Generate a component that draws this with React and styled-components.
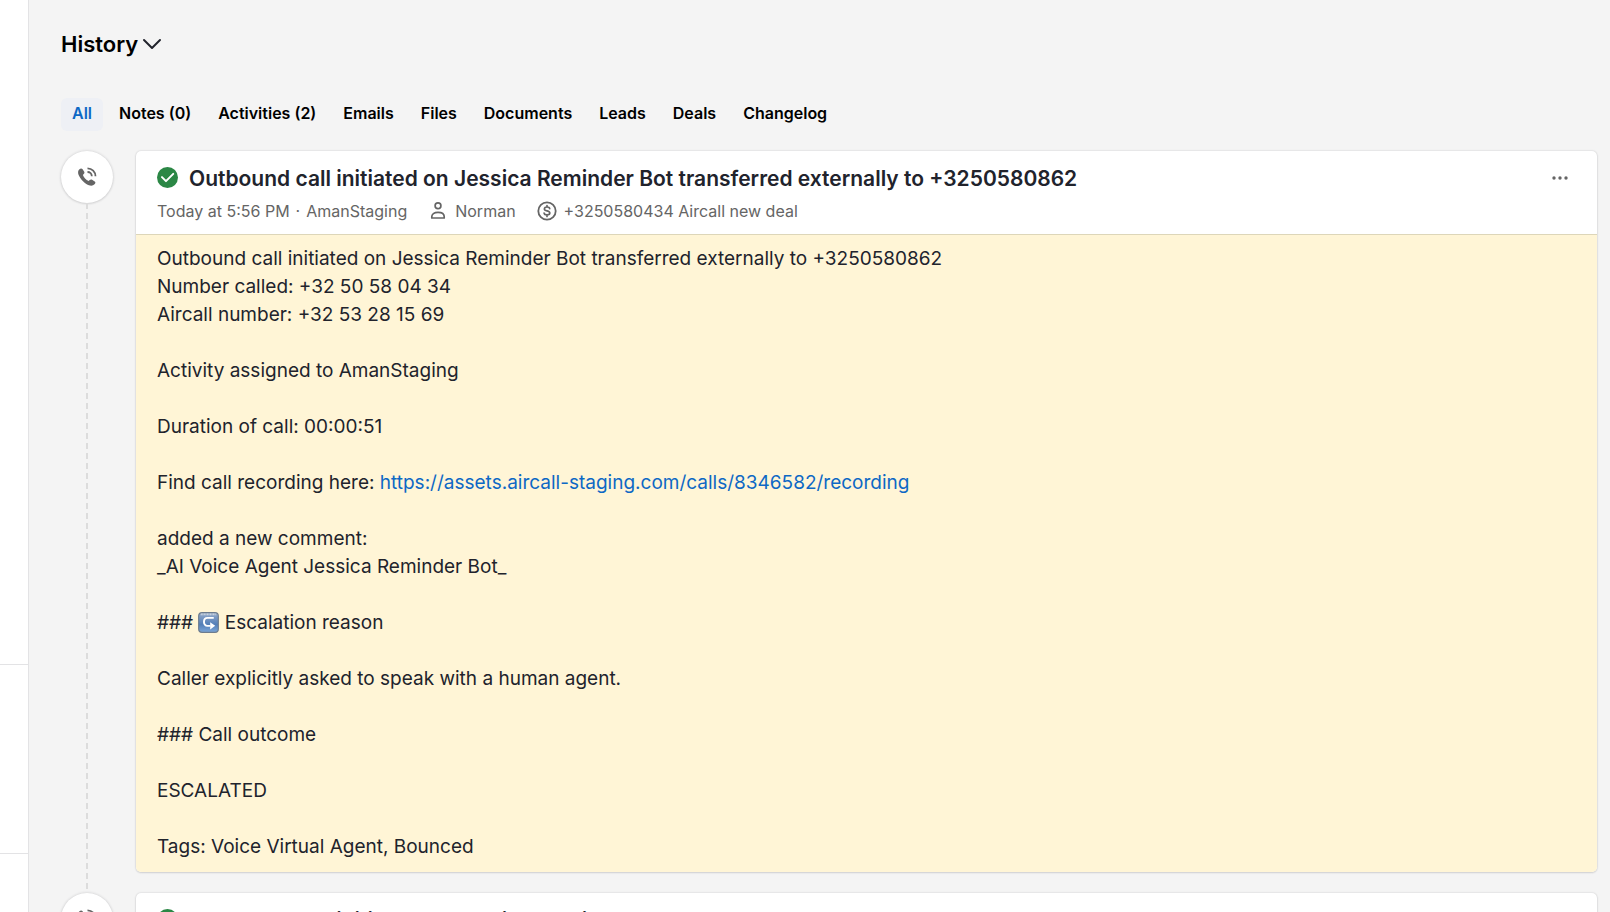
import { useState } from 'react'
import styled, { createGlobalStyle } from 'styled-components'


const GlobalStyle = createGlobalStyle`
    * {
        box-sizing: border-box;
    }

    body {
        margin: 0;
        background: #f4f4f4;
        color: #21232c;
        font-family: Inter, 'Liberation Sans', sans-serif;
    }

    button {
        padding: 0;
        border: 0;
        background: none;
        font-family: inherit;
        cursor: pointer;
    }
`

const tabs = ['All', 'Notes (0)', 'Activities (2)', 'Emails', 'Files', 'Documents', 'Leads', 'Deals', 'Changelog']

const ChevronIcon = ()=>{
    return <svg width="20" height="12" viewBox="0 0 20 12" fill="none" stroke="#21232c" strokeWidth="2" strokeLinecap="round" strokeLinejoin="round" aria-hidden="true">
        <path d="M2 2l8 8 8-8" />
    </svg>
}

const CallIcon = ()=>{
    return <svg width="20" height="20" viewBox="0 0 20 20" aria-hidden="true">
        <path d="M2.2 2.6C3.4 1.3 4.6 1 5.4 2.1l1.7 2.5c.6.9.4 1.8-.4 2.5l-.8.8c.8 2.3 3 4.8 5.8 6l1-.9c.8-.7 1.6-.8 2.4-.2l2.6 1.7c1 .7.9 1.7-.2 2.8-1.7 1.8-4.6 1.9-8.2-.3C4.800 14.200.6 8.200 1.100 4.800c.1-.9.5-1.600 1.100-2.200z" fill="#656565" />
        <path d="M10.500 1.300c4.500 0 8 3.500 8 8M10.500 5c2.500 0 4.300 1.800 4.300 4.300" fill="none" stroke="#656565" strokeWidth="1.800" />
    </svg>
}

const CheckIcon = ()=>{
    return <svg width="21" height="21" viewBox="0 0 22 22" aria-hidden="true">
        <circle cx="11" cy="11" r="11" fill="#2b8745" />
        <path d="M5.200 10.600l4.200 4.200 7.600-7.600" fill="none" stroke="#fff" strokeWidth="2.100" strokeLinecap="round" strokeLinejoin="round" />
    </svg>
}

const PersonIcon = ()=>{
    return <svg width="22" height="22" viewBox="0 0 22 22" fill="none" stroke="#656565" strokeWidth="1.700" strokeLinejoin="round" aria-hidden="true">
        <circle cx="11" cy="5.700" r="2.900" />
        <path d="M4.800 18v-1.400c0-2.300 2.200-4.300 6.200-4.300s6.200 2 6.200 4.300V18z" />
    </svg>
}

const DealIcon = ()=>{
    return <svg width="22" height="22" viewBox="0 0 22 22" fill="none" stroke="#656565" strokeWidth="1.800" strokeLinecap="round" aria-hidden="true">
        <circle cx="11" cy="11" r="8.700" />
        <path d="M13.700 8.700c-.2-1.100-1.200-1.700-2.700-1.700s-2.600.7-2.600 1.900c0 2.700 5.400 1.300 5.400 4.100 0 1.200-1.100 1.900-2.800 1.900-1.600 0-2.700-.6-2.900-1.800M11 5.600v1.400M11 15v1.400" strokeWidth="1.700" />
    </svg>
}

const ArrowEmoji = ()=>{
    return <Emoji viewBox="0 0 22 22" role="img" aria-label="right arrow curving">
        <defs>
            <linearGradient id="key" x1="0" y1="0" x2="0" y2="1">
                <stop offset="0" stopColor="#a3b5cc" />
                <stop offset=".2" stopColor="#7f9cc4" />
                <stop offset=".6" stopColor="#547fb8" />
                <stop offset="1" stopColor="#7ba6d8" />
            </linearGradient>
        </defs>
        <rect x=".7" y=".7" width="20.600" height="20.600" rx="3.500" fill="url(#key)" stroke="#6d7c8e" strokeWidth="1.200" />
        <path d="M3 2.500h16" stroke="#cbd4df" strokeWidth="1.800" strokeDasharray="1 .6" />
        <path d="M16.500 6.200H10c-5 0-5 8.300 0 8.300h3" fill="none" stroke="#fff" strokeWidth="2" />
        <path d="M12.800 10.700v7.600l5.200-3.800z" fill="#fff" />
    </Emoji>
}

const Activity = ({ title, children })=>{
    return <Entry>
        <Rail>
            <Bubble><CallIcon /></Bubble>
            <Thread />
        </Rail>
        <Card>
            <CardHeader>
                <TitleRow>
                    <CheckIcon />
                    <Title>{title}</Title>
                    <MoreButton type="button" aria-label="More actions">
                        <svg width="16" height="4" viewBox="0 0 16 4" fill="#656565" aria-hidden="true">
                            <circle cx="2" cy="2" r="1.700" />
                            <circle cx="8" cy="2" r="1.700" />
                            <circle cx="14" cy="2" r="1.700" />
                        </svg>
                    </MoreButton>
                </TitleRow>
                <Meta>
                    <MetaItem><span>Today at 5:56 PM</span><span>·</span><span>AmanStaging</span></MetaItem>
                    <MetaItem><PersonIcon />Norman</MetaItem>
                    <MetaItem><DealIcon />+3250580434 Aircall new deal</MetaItem>
                </Meta>
            </CardHeader>
            <Note>{children}</Note>
        </Card>
    </Entry>
}

const App = ()=>{
    const [active, setActive] = useState('All')

    return <Page>
        <GlobalStyle />
        <Sidebar>
            <SidePanel $grow={665} />
            <SidePanel $grow={189} />
            <SidePanel $grow={58} />
        </Sidebar>
        <Main>
            <Heading>
                <HeadingButton type="button">History<ChevronIcon /></HeadingButton>
            </Heading>
            <Tabs>
                {tabs.map((tab)=>{
                    return <Tab key={tab} type="button" $active={tab === active} onClick={()=>setActive(tab)}>{tab}</Tab>
                })}
            </Tabs>
            <Activity title="Outbound call initiated on Jessica Reminder Bot transferred externally to +3250580862">
                <p>
                    Outbound call initiated on Jessica Reminder Bot transferred externally to +3250580862<br />
                    Number called: +32 50 58 04 34<br />
                    Aircall number: +32 53 28 15 69
                </p>
                <p>Activity assigned to AmanStaging</p>
                <p>Duration of call: 00:00:51</p>
                <p>Find call recording here: <a href="https://assets.aircall-staging.com/calls/8346582/recording">https://assets.aircall-staging.com/calls/8346582/recording</a></p>
                <p>
                    added a new comment:<br />
                    _AI Voice Agent Jessica Reminder Bot_
                </p>
                <p>### <ArrowEmoji /> Escalation reason</p>
                <p>Caller explicitly asked to speak with a human agent.</p>
                <p>### Call outcome</p>
                <p>ESCALATED</p>
                <p>Tags: Voice Virtual Agent, Bounced</p>
            </Activity>
            <Activity title="Outbound call initiated on Jessica Reminder Bot" />
        </Main>
    </Page>
}

const Page = styled.div`
    display: flex;
    height: 100vh;
    overflow: hidden;
`

const Sidebar = styled.aside`
    display: flex;
    flex-direction: column;
    flex: none;
    width: 29px;
    background: white;
    border-right: 1px solid #e3e3e5;
`

const SidePanel = styled.div`
    flex: ${(props) => props.$grow} 1 0;

    & + & {
        border-top: 1px solid #e3e3e5;
    }
`

const Main = styled.main`
    flex: 1;
    min-width: 0;
    padding: 28px 13px 0 32px;
`

const Heading = styled.h1`
    margin: 0 0 38px;
    line-height: 32px;
`

const HeadingButton = styled.button`
    display: flex;
    align-items: center;
    gap: 4px;
    color: black;
    font-size: 22px;
    font-weight: 600;
    line-height: 32px;
`

const Tabs = styled.div`
    display: flex;
    gap: 5px;
    margin-bottom: 20px;
`

const Tab = styled.button`
    padding: 0 11px 2px;
    border-radius: 6px;
    background: ${(props) => props.$active ? '#eef0f5' : 'none'};
    color: ${(props) => props.$active ? '#0d68c5' : 'black'};
    font-size: 16px;
    font-weight: 600;
    line-height: 31px;
`

const Entry = styled.article`
    display: flex;
    gap: 23px;
`

const Rail = styled.div`
    display: flex;
    flex-direction: column;
    align-items: center;
    flex: none;
    width: 52px;
`

const Bubble = styled.div`
    display: flex;
    align-items: center;
    justify-content: center;
    flex: none;
    width: 52px;
    height: 52px;
    border-radius: 50%;
    background: white;
    box-shadow: 0 0 3px rgba(33, 35, 44, 0.2), 0 1px 2px rgba(33, 35, 44, 0.08);
`

const Thread = styled.div`
    flex: 1;
    width: 2px;
    background: repeating-linear-gradient(#dcdcdc 0 6px, transparent 6px 10px);
`

const Card = styled.section`
    flex: 1;
    min-width: 0;
    margin-bottom: 21px;
    border-radius: 5px;
    background: white;
    box-shadow: 0 0 2px rgba(33, 35, 44, 0.2), 0 1px 2px rgba(33, 35, 44, 0.12);
    overflow: hidden;
`

const CardHeader = styled.header`
    padding: 16px 21px 11px;
    border-bottom: 1px solid #ddd6b9;
`

const TitleRow = styled.div`
    display: flex;
    align-items: flex-start;

    svg {
        flex: none;
    }
`

const Title = styled.h2`
    flex: 1;
    margin: 0 0 0 11px;
    font-size: 21px;
    font-weight: 600;
    line-height: 24px;
`

const MoreButton = styled.button`
    display: flex;
    align-items: center;
    height: 22px;
    padding: 0 8px;
`

const Meta = styled.div`
    display: flex;
    align-items: center;
    gap: 20px;
    margin-top: 8px;
    color: #656565;
    font-size: 16px;
    line-height: 24px;
`

const MetaItem = styled.span`
    display: flex;
    align-items: center;
    gap: 6px;
`

const Note = styled.div`
    padding: 10px 21px 11px;
    background: #fff5d6;
    font-size: 19px;
    line-height: 28px;

    p {
        margin: 0 0 28px;
    }

    p:last-child {
        margin: 0;
    }

    a {
        color: #0d68c5;
        text-decoration: none;
    }
`

const Emoji = styled.svg`
    width: 21px;
    height: 21px;
    vertical-align: -4px;
`

export default App
